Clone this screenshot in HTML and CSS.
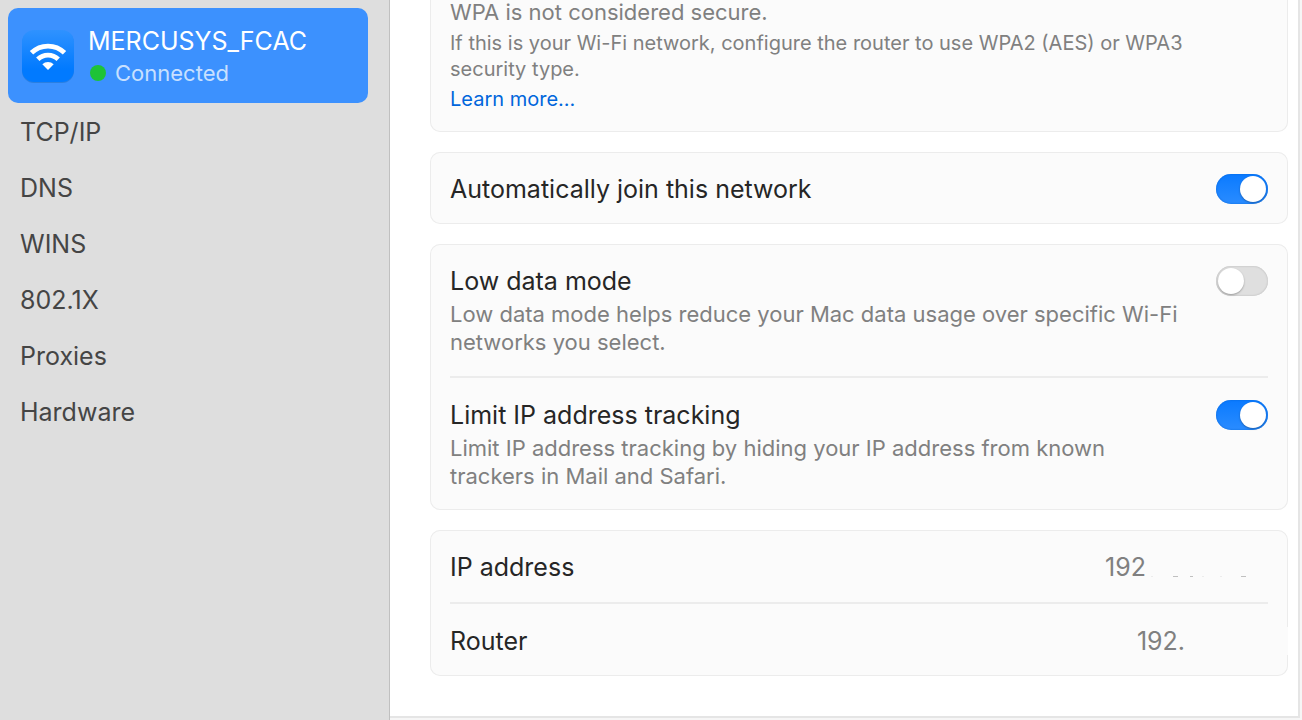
FILE: index.html
```html
<!DOCTYPE html>
<html lang="en">
	<head>
		<meta charset="utf-8">
		<title>Network details</title>
		<link rel="stylesheet" href="styles.css">
	</head>
	<body>
		<div class="window">
			<nav class="sidebar">
				<a href="#wifi" class="network">
					<svg class="wifi" viewBox="0 0 54 54" width="54" height="54" aria-hidden="true">
						<defs>
							<linearGradient id="wifi-bg" x1="0" y1="0" x2="0" y2="1">
								<stop offset="0" stop-color="#2f92ff"/>
								<stop offset="0.75" stop-color="#017aff"/>
							</linearGradient>
						</defs>
						<rect x="1" y="2" width="52" height="52" rx="12" fill="#2b7fe0"/>
						<rect x="1" y="1" width="52" height="52" rx="12" fill="url(#wifi-bg)"/>
						<g fill="none" stroke="#fff" stroke-width="4.800">
							<path d="M10.500 23.800a23.500 23.500 0 0 1 33 0"/>
							<path d="M16.800 30.300a14.500 14.500 0 0 1 20.400 0"/>
						</g>
						<path d="M27 41l-5.700-5.700a8.300 8.300 0 0 1 11.400 0z" fill="#fff"/>
					</svg>
					<span class="network-text">
						<span class="network-name">MERCUSYS_FCAC</span>
						<span class="status"><i class="dot"></i>Connected</span>
					</span>
				</a>
				<a href="#tcpip" class="nav-item">TCP/IP</a>
				<a href="#dns" class="nav-item">DNS</a>
				<a href="#wins" class="nav-item">WINS</a>
				<a href="#8021x" class="nav-item">802.1X</a>
				<a href="#proxies" class="nav-item">Proxies</a>
				<a href="#hardware" class="nav-item">Hardware</a>
			</nav>
			<main class="content">
				<section class="card notice">
					<p class="notice-title">WPA is not considered secure.</p>
					<p class="notice-text">If this is your Wi-Fi network, configure the router to use WPA2 (AES) or WPA3 security type.</p>
					<a href="#learn" class="more">Learn more...</a>
				</section>
				<section class="card">
					<div class="row single">
						<label class="title" for="autojoin">Automatically join this network</label>
						<input type="checkbox" class="switch" id="autojoin" checked>
					</div>
				</section>
				<section class="card">
					<div class="row">
						<div class="text">
							<label class="title" for="lowdata">Low data mode</label>
							<p class="desc">Low data mode helps reduce your Mac data usage over specific Wi-Fi networks you select.</p>
						</div>
						<input type="checkbox" class="switch" id="lowdata">
					</div>
					<hr>
					<div class="row">
						<div class="text">
							<label class="title" for="limitip">Limit IP address tracking</label>
							<p class="desc">Limit IP address tracking by hiding your IP address from known trackers in Mail and Safari.</p>
						</div>
						<input type="checkbox" class="switch" id="limitip" checked>
					</div>
				</section>
				<section class="card">
					<div class="row single">
						<span class="title">IP address</span>
						<span class="value">192<svg class="mask" viewBox="0 0 122 28" aria-hidden="true">
							<path d="M27 23.500h5M44 23.500h3M95 23.500h5" stroke="#c0c0c0" fill="none"/>
							<path d="M5 23.500h2M56 23.500h2M74 23.500h2" stroke="#ececec" fill="none"/>
						</svg></span>
					</div>
					<hr>
					<div class="row single">
						<span class="title">Router</span>
						<span class="value">192.<i class="mask wide"></i></span>
					</div>
				</section>
			</main>
		</div>
	</body>
</html>
```
FILE: styles.css
```css
*{
	margin:0;
	padding:0;
	box-sizing:border-box;
}
body{
	font-family:Inter, "Liberation Sans", sans-serif;
	font-size:25px;
	color:#262626;
	background:#f6f6f6;
}
a{
	text-decoration:none;
}
.window{
	display:flex;
	min-height:100vh;
}

/* sidebar */
.sidebar{
	width:390px;
	flex-shrink:0;
	padding:8px 21px 0 8px;
	background:#dedede;
	border-right:1px solid #c0c0c0;
}
.network{
	display:flex;
	align-items:center;
	gap:13px;
	height:95px;
	margin-bottom:1px;
	padding-left:13px;
	border-radius:10px;
	background:#3c91fe;
	color:#fff;
}
.network-text{
	display:flex;
	flex-direction:column;
}
.network-name{
	line-height:34px;
}
.status{
	display:flex;
	align-items:center;
	gap:9px;
	padding-left:2px;
	font-size:22px;
	line-height:30px;
	color:#c8e0ff;
}
.dot{
	width:16px;
	height:16px;
	border-radius:50%;
	background:#1ec337;
}
.nav-item{
	display:block;
	padding-left:12px;
	line-height:56px;
	color:#454545;
}

/* settings */
.content{
	flex:1;
	display:flex;
	flex-direction:column;
	gap:20px;
	margin:0 2px 2px 0;
	padding:0 10px 0 40px;
	background:#fff;
	border-right:2px solid #e5e5e5;
	border-bottom:2px solid #e5e5e5;
}
.card{
	padding:0 20px;
	border-radius:10px;
	background:#fbfbfb;
	box-shadow:inset 0 0 0 1px #ececec;
}
/* scrolled partly out of the window */
.notice{
	margin-top:-20px;
	padding-top:20px;
	padding-bottom:20px;
	font-size:20px;
	line-height:26px;
	color:#808080;
}
.notice-title{
	margin-bottom:6px;
	font-size:22px;
	line-height:24px;
}
.notice-text{
	max-width:780px;
	margin-bottom:4px;
}
.more{
	display:block;
	color:#0066dc;
}
.row{
	display:flex;
	justify-content:space-between;
	padding:20px 0;
}
.single{
	padding:20px 0 18px;
}
.text{
	max-width:736px;
}
.title{
	display:block;
	line-height:34px;
}
.desc{
	margin-top:2px;
	font-size:22px;
	line-height:28px;
	color:#808080;
}
hr{
	height:2px;
	border:0;
	background:#ececec;
}
.switch{
	appearance:none;
	flex-shrink:0;
	width:52px;
	height:30px;
	margin-top:2px;
	padding:2px;
	border-radius:15px;
	background:#dfdfdf;
	box-shadow:inset 0 0 2px #b0b0b0;
}
.switch::before{
	content:"";
	display:block;
	width:26px;
	height:26px;
	border-radius:50%;
	background:#fff;
	box-shadow:0 1px 2px rgba(0,0,0,0.3);
}
.switch:checked{
	background:linear-gradient(#0a7aff,#2a8cff);
	box-shadow:inset 0 0 2px #0062d6;
}
.switch:checked::before{
	margin-left:22px;
}
.value{
	display:flex;
	align-items:center;
	line-height:34px;
	color:#808080;
}
.mask{
	width:122px;
	height:28px;
	background:#fbfbfb;
}
/* runs over the edge of the card */
.wide{
	width:103px;
	margin-right:-20px;
}
```
